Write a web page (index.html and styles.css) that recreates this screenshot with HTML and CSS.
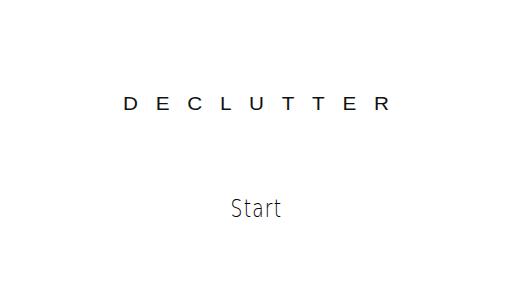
FILE: index.html
```html
<!DOCTYPE html>
<html>
<head>
<meta charset="utf-8">
<link rel="stylesheet" href="styles.css">
</head>
<body>
<main class="screen">
  <h1 class="title">DECLUTTER</h1>
  <button class="start">Start</button>
</main>
</body>
</html>
```
FILE: styles.css
```css
html, body {
  margin: 0;
  padding: 0;
  background: #ffffff;
}
.screen {
  width: 512px;
  height: 288px;
  display: flex;
  flex-direction: column;
  align-items: center;
}
.title {
  margin: 94px 0 0 0;
  padding-left: 15.4px;
  font-family: "Liberation Sans", Arial, sans-serif;
  font-weight: 400;
  font-size: 18px;
  line-height: 20px;
  letter-spacing: 15.4px;
  color: #111111;
  transform: scaleX(1.15);
}
.start {
  margin-top: 81px;
  border: none;
  background: none;
  padding: 0 0 0 1.5px;
  font-family: "DejaVu Sans", sans-serif;
  font-weight: 200;
  font-size: 24px;
  line-height: 28px;
  letter-spacing: 1.5px;
  color: #000000;
  transform: scaleX(0.78);
}
```
